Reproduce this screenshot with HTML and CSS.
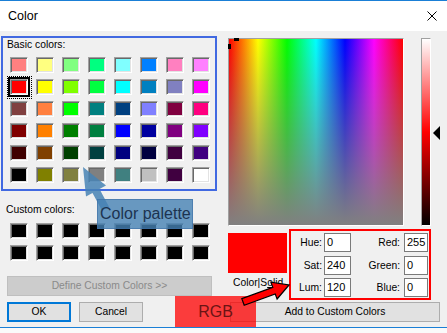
FILE: index.html
```html
<!DOCTYPE html>
<html>
<head>
<meta charset="utf-8">
<title>Color</title>
<link rel="stylesheet" href="styles.css">
</head>
<body>
<div class="window">
  <div class="titlebar">
    <span class="title">Color</span>
    <svg class="close" viewBox="0 0 10 10"><path d="M0.5 0.5 L9.5 9.5 M9.5 0.5 L0.5 9.5" stroke="#000" stroke-width="1" fill="none"/></svg>
  </div>
  <div class="main">
    <div class="left">
      <div class="group">
        <div class="label">Basic colors:</div>
        <div class="grid">
          <span class="sw" style="background-color:#ff8080"></span>
          <span class="sw" style="background-color:#ffff80"></span>
          <span class="sw" style="background-color:#80ff80"></span>
          <span class="sw" style="background-color:#00ff80"></span>
          <span class="sw" style="background-color:#80ffff"></span>
          <span class="sw" style="background-color:#0080ff"></span>
          <span class="sw" style="background-color:#ff80c0"></span>
          <span class="sw" style="background-color:#ff80ff"></span>

          <span class="sw sel" style="background-color:#ff0000"></span>
          <span class="sw" style="background-color:#ffff00"></span>
          <span class="sw" style="background-color:#80ff00"></span>
          <span class="sw" style="background-color:#00ff40"></span>
          <span class="sw" style="background-color:#00ffff"></span>
          <span class="sw" style="background-color:#0080c0"></span>
          <span class="sw" style="background-color:#8080c0"></span>
          <span class="sw" style="background-color:#ff00ff"></span>

          <span class="sw" style="background-color:#804040"></span>
          <span class="sw" style="background-color:#ff8040"></span>
          <span class="sw" style="background-color:#00ff00"></span>
          <span class="sw" style="background-color:#008080"></span>
          <span class="sw" style="background-color:#004080"></span>
          <span class="sw" style="background-color:#8080ff"></span>
          <span class="sw" style="background-color:#800040"></span>
          <span class="sw" style="background-color:#ff0080"></span>

          <span class="sw" style="background-color:#800000"></span>
          <span class="sw" style="background-color:#ff8000"></span>
          <span class="sw" style="background-color:#008000"></span>
          <span class="sw" style="background-color:#008040"></span>
          <span class="sw" style="background-color:#0000ff"></span>
          <span class="sw" style="background-color:#0000a0"></span>
          <span class="sw" style="background-color:#800080"></span>
          <span class="sw" style="background-color:#8000ff"></span>

          <span class="sw" style="background-color:#400000"></span>
          <span class="sw" style="background-color:#804000"></span>
          <span class="sw" style="background-color:#004000"></span>
          <span class="sw" style="background-color:#004040"></span>
          <span class="sw" style="background-color:#000080"></span>
          <span class="sw" style="background-color:#000040"></span>
          <span class="sw" style="background-color:#400040"></span>
          <span class="sw" style="background-color:#400080"></span>

          <span class="sw" style="background-color:#000000"></span>
          <span class="sw" style="background-color:#808000"></span>
          <span class="sw" style="background-color:#808040"></span>
          <span class="sw" style="background-color:#808080"></span>
          <span class="sw" style="background-color:#408080"></span>
          <span class="sw" style="background-color:#c0c0c0"></span>
          <span class="sw" style="background-color:#400040"></span>
          <span class="sw" style="background-color:#ffffff"></span>
        </div>
      </div>
      <div class="label custom-label">Custom colors:</div>
      <div class="grid custom">
        <span class="sw blk"></span><span class="sw blk"></span><span class="sw blk"></span><span class="sw blk"></span>
        <span class="sw blk"></span><span class="sw blk"></span><span class="sw blk"></span><span class="sw blk"></span>
        <span class="sw blk"></span><span class="sw blk"></span><span class="sw blk"></span><span class="sw blk"></span>
        <span class="sw blk"></span><span class="sw blk"></span><span class="sw blk"></span><span class="sw blk"></span>
      </div>
      <button class="btn define" disabled>Define Custom Colors &gt;&gt;</button>
    </div>
    <div class="right">
      <div class="picker">
        <div class="spectrum"><span class="cross ch"></span><span class="cross cv"></span></div>
        <div class="lum"></div>
        <svg class="pointer" viewBox="0 0 7 14"><path d="M0 7 L7 0 L7 14 Z" fill="#000"/></svg>
      </div>
      <div class="values">
        <div class="preview-col">
          <div class="preview"></div>
          <div class="preview-label">Color|S<u>o</u>lid</div>
        </div>
        <div class="fields">
          <span class="fl">Hue:</span><span class="field">0</span>
          <span class="fl r">Red:</span><span class="field">255</span>
          <span class="fl">Sat:</span><span class="field">240</span>
          <span class="fl r">Green:</span><span class="field">0</span>
          <span class="fl">Lum:</span><span class="field">120</span>
          <span class="fl r">Blue:</span><span class="field">0</span>
        </div>
      </div>
    </div>
  </div>
  <div class="buttons">
    <button class="btn ok">OK</button>
    <button class="btn cancel">Cancel</button>
    <button class="btn add">Add to Custom Colors</button>
  </div>
  <div class="footer"></div>

  <svg class="overlay" viewBox="0 0 447 333">
    <polygon points="83,167 106,185.5 99.5,189.1 109,206.7 102,210.5 92.5,192.9 86,196.5" fill="rgba(70,130,180,0.85)"/>
  </svg>
  <div class="callout blue-callout">Color palette</div>
  <div class="callout red-callout">RGB</div>
  <svg class="overlay" viewBox="0 0 447 333">
    <polygon points="289,285 277.1,299 275.2,293.9 244.2,305.3 241.8,298.7 272.8,287.3 270.9,282.2" fill="#ff0000" stroke="#000" stroke-width="1.2" stroke-linejoin="miter"/>
  </svg>
</div>
</body>
</html>
```

FILE: styles.css
```css
* { box-sizing: border-box; }
html, body { margin: 0; padding: 0; }
body {
  width: 447px;
  height: 333px;
  overflow: hidden;
  background: #fff;
  font-family: "Liberation Sans", Arial, sans-serif;
  font-size: 10.3px;
  color: #000;
}
.window {
  position: relative;
  width: 447px;
  height: 333px;
  background: #f0f0f0;
  overflow: hidden;
}
.titlebar {
  height: 31px;
  background: #fff;
  border-top: 1px solid #1a7fd6;
  display: flex;
  align-items: center;
  justify-content: space-between;
  padding: 0 10px 0 8px;
}
.title { font-size: 12.5px; }
.close { width: 10px; height: 10px; display: block; }

.main { display: flex; height: 271px; }
.left {
  width: 228px;
  display: flex;
  flex-direction: column;
  align-items: flex-start;
}
.group {
  margin: 5px 0 0 1px;
  width: 216px;
  border: 2px solid #4169e1;
  padding: 0 5px 6px 7px;
}
.label { height: 14px; line-height: 14px; white-space: nowrap; }
.group .label { margin-left: -3px; }
.group .grid { margin-top: 5px; }
.grid {
  display: grid;
  grid-template-columns: repeat(8, 18px);
  grid-auto-rows: 16px;
  column-gap: 8px;
  row-gap: 6px;
}
.sw {
  position: relative;
  display: block;
  border: 1px solid;
  border-color: #a0a0a0 #fff #fff #a0a0a0;
  box-shadow: inset 1px 1px #696969, inset -1px -1px #e3e3e3;
}
.sw.blk { background-color: #000; }
.sw.sel { outline: 2px solid #000; }
.sw.sel::after {
  content: "";
  position: absolute;
  left: -4px;
  top: -4px;
  right: -5px;
  bottom: -5px;
  border: 1px dotted #000;
}
.custom-label { margin: 12px 0 0 6px; }
.custom { margin: 6px 0 0 10px; }

button.btn {
  font-family: inherit;
  font-size: inherit;
  color: #000;
  padding: 0;
  margin: 0;
  height: 20px;
  background: #e1e1e1;
  border: 1px solid #adadad;
  line-height: 16px;
}
button.define {
  margin: 15px 0 0 7px;
  width: 205px;
  background: #cccccc;
  border-color: #bfbfbf;
  color: #8a8a8a;
}

.right { flex: 1; display: flex; flex-direction: column; }
.picker { display: flex; align-items: flex-start; margin-top: 7px; }
.spectrum {
  position: relative;
  width: 176px;
  height: 188px;
  border: 1px solid;
  border-color: #a0a0a0 #fff #fff #a0a0a0;
  background:
    linear-gradient(to bottom, rgba(128,128,128,0), #808080),
    linear-gradient(to right, #f00, #ff0, #0f0, #0ff, #00f, #f0f, #f00);
}
.cross { position: absolute; background: #000; }
.ch { left: 5px; top: -1px; width: 5px; height: 3px; }
.cv { left: -1px; top: 5px; width: 3px; height: 5px; }
.lum {
  margin-left: 17px;
  width: 10px;
  height: 188px;
  border: 1px solid;
  border-color: #a0a0a0 #fff #fff #a0a0a0;
  background: linear-gradient(#fff, #f00, #000);
}
.pointer { margin-left: 2px; margin-top: 88px; width: 7px; height: 14px; display: block; }

.values { display: flex; align-items: flex-start; margin-top: 3px; }
.preview-col { margin-top: 4px; width: 59px; }
.preview { height: 40px; background: #f00; }
.preview-label { margin-top: 3px; line-height: 14px; white-space: nowrap; padding-left: 5px; }
.fields {
  margin-left: 2px;
  width: 142px;
  height: 71px;
  border: 2px solid #f00;
  padding: 2px 1px 1px 0;
  display: grid;
  grid-template-columns: 33px 27px 53px 24px;
  grid-template-rows: repeat(3, 19px);
  row-gap: 3.5px;
  align-items: center;
}
.fl { text-align: right; padding-right: 2px; white-space: nowrap; }
.fl.r { padding-right: 4px; }
.field {
  height: 19px;
  border: 1px solid #7a7a7a;
  background: #fff;
  padding-left: 2px;
  line-height: 17px;
  font-size: 11px;
}

.buttons { display: flex; height: 20px; padding-left: 7px; }
button.ok { width: 64px; border: 2px solid #0078d7; }
button.cancel { width: 64px; margin-left: 8px; }
button.add { width: 210px; margin-left: 87px; }

.footer { margin-top: 5px; border-top: 1px solid #1a7fd6; height: 7px; background: #fafafa; }

.overlay {
  position: absolute;
  left: 0;
  top: 0;
  width: 447px;
  height: 333px;
  pointer-events: none;
}
.callout {
  position: absolute;
  font-size: 16px;
  line-height: 30px;
  white-space: nowrap;
}
.blue-callout {
  left: 97px;
  top: 199px;
  width: 96px;
  height: 30px;
  padding-left: 2px;
  background: rgba(70,130,180,0.8);
  border: 1px solid rgba(60,110,165,0.6);
  color: #1c3350;
  line-height: 28px;
}
.red-callout {
  left: 175px;
  top: 296px;
  width: 81px;
  height: 31px;
  background: rgba(255,0,0,0.75);
  color: #6b1414;
  text-align: center;
  line-height: 31px;
}
```
